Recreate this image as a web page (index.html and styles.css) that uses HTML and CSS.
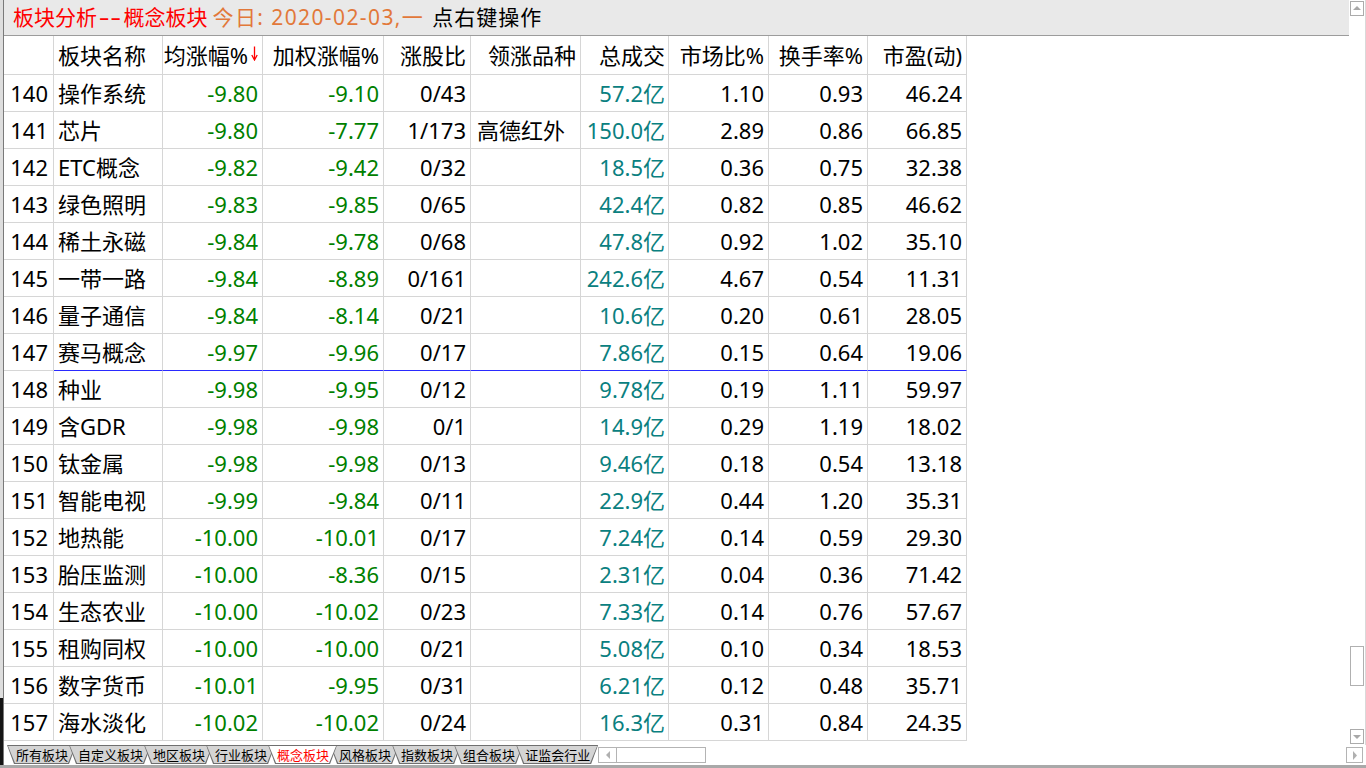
FILE: index.html
```html
<!DOCTYPE html>
<html lang="zh-CN">
<head>
<meta charset="utf-8">
<title>板块分析--概念板块</title>
<link rel="stylesheet" href="styles.css">
</head>
<body>
<div class="app">
  <div class="frame">
    <div class="edge"></div>
    <div class="content">
      <div class="upper">
        <div class="main">
          <div class="titlebar">
            <span class="t-red">板块分析<span class="dash">--</span>概念板块</span>
            <span class="t-orange">今日: 2020-02-03,一</span>
            <span class="t-black">点右键操作</span>
          </div>
          <div class="grid">
            <div class="row head">
              <div class="c idx"></div>
              <div class="c name">板块名称</div>
              <div class="c w100">均涨幅%<svg class="sort" width="7" height="15" viewBox="0 0 7 15"><path d="M3.5 0.5 V13" stroke="#ff0000" stroke-width="1.3"/><path d="M0.8 9 L3.5 14 L6.2 9" fill="none" stroke="#ff0000" stroke-width="1.3"/></svg></div>
              <div class="c w121">加权涨幅%</div>
              <div class="c w87">涨股比</div>
              <div class="c w110">领涨品种</div>
              <div class="c w88">总成交</div>
              <div class="c w100b">市场比%</div>
              <div class="c w99">换手率%</div>
              <div class="c w99">市盈(动)</div>
            </div>
            <div class="row"><div class="c idx">140</div><div class="c name">操作系统</div><div class="c w100 g">-9.80</div><div class="c w121 g">-9.10</div><div class="c w87">0/43</div><div class="c w110 lead"></div><div class="c w88 t">57.2亿</div><div class="c w100b">1.10</div><div class="c w99">0.93</div><div class="c w99">46.24</div></div>
            <div class="row"><div class="c idx">141</div><div class="c name">芯片</div><div class="c w100 g">-9.80</div><div class="c w121 g">-7.77</div><div class="c w87">1/173</div><div class="c w110 lead">高德红外</div><div class="c w88 t">150.0亿</div><div class="c w100b">2.89</div><div class="c w99">0.86</div><div class="c w99">66.85</div></div>
            <div class="row"><div class="c idx">142</div><div class="c name">ETC概念</div><div class="c w100 g">-9.82</div><div class="c w121 g">-9.42</div><div class="c w87">0/32</div><div class="c w110 lead"></div><div class="c w88 t">18.5亿</div><div class="c w100b">0.36</div><div class="c w99">0.75</div><div class="c w99">32.38</div></div>
            <div class="row"><div class="c idx">143</div><div class="c name">绿色照明</div><div class="c w100 g">-9.83</div><div class="c w121 g">-9.85</div><div class="c w87">0/65</div><div class="c w110 lead"></div><div class="c w88 t">42.4亿</div><div class="c w100b">0.82</div><div class="c w99">0.85</div><div class="c w99">46.62</div></div>
            <div class="row"><div class="c idx">144</div><div class="c name">稀土永磁</div><div class="c w100 g">-9.84</div><div class="c w121 g">-9.78</div><div class="c w87">0/68</div><div class="c w110 lead"></div><div class="c w88 t">47.8亿</div><div class="c w100b">0.92</div><div class="c w99">1.02</div><div class="c w99">35.10</div></div>
            <div class="row"><div class="c idx">145</div><div class="c name">一带一路</div><div class="c w100 g">-9.84</div><div class="c w121 g">-8.89</div><div class="c w87">0/161</div><div class="c w110 lead"></div><div class="c w88 t">242.6亿</div><div class="c w100b">4.67</div><div class="c w99">0.54</div><div class="c w99">11.31</div></div>
            <div class="row"><div class="c idx">146</div><div class="c name">量子通信</div><div class="c w100 g">-9.84</div><div class="c w121 g">-8.14</div><div class="c w87">0/21</div><div class="c w110 lead"></div><div class="c w88 t">10.6亿</div><div class="c w100b">0.20</div><div class="c w99">0.61</div><div class="c w99">28.05</div></div>
            <div class="row sep"><div class="c idx">147</div><div class="c name">赛马概念</div><div class="c w100 g">-9.97</div><div class="c w121 g">-9.96</div><div class="c w87">0/17</div><div class="c w110 lead"></div><div class="c w88 t">7.86亿</div><div class="c w100b">0.15</div><div class="c w99">0.64</div><div class="c w99">19.06</div></div>
            <div class="row"><div class="c idx">148</div><div class="c name">种业</div><div class="c w100 g">-9.98</div><div class="c w121 g">-9.95</div><div class="c w87">0/12</div><div class="c w110 lead"></div><div class="c w88 t">9.78亿</div><div class="c w100b">0.19</div><div class="c w99">1.11</div><div class="c w99">59.97</div></div>
            <div class="row"><div class="c idx">149</div><div class="c name">含GDR</div><div class="c w100 g">-9.98</div><div class="c w121 g">-9.98</div><div class="c w87">0/1</div><div class="c w110 lead"></div><div class="c w88 t">14.9亿</div><div class="c w100b">0.29</div><div class="c w99">1.19</div><div class="c w99">18.02</div></div>
            <div class="row"><div class="c idx">150</div><div class="c name">钛金属</div><div class="c w100 g">-9.98</div><div class="c w121 g">-9.98</div><div class="c w87">0/13</div><div class="c w110 lead"></div><div class="c w88 t">9.46亿</div><div class="c w100b">0.18</div><div class="c w99">0.54</div><div class="c w99">13.18</div></div>
            <div class="row"><div class="c idx">151</div><div class="c name">智能电视</div><div class="c w100 g">-9.99</div><div class="c w121 g">-9.84</div><div class="c w87">0/11</div><div class="c w110 lead"></div><div class="c w88 t">22.9亿</div><div class="c w100b">0.44</div><div class="c w99">1.20</div><div class="c w99">35.31</div></div>
            <div class="row"><div class="c idx">152</div><div class="c name">地热能</div><div class="c w100 g">-10.00</div><div class="c w121 g">-10.01</div><div class="c w87">0/17</div><div class="c w110 lead"></div><div class="c w88 t">7.24亿</div><div class="c w100b">0.14</div><div class="c w99">0.59</div><div class="c w99">29.30</div></div>
            <div class="row"><div class="c idx">153</div><div class="c name">胎压监测</div><div class="c w100 g">-10.00</div><div class="c w121 g">-8.36</div><div class="c w87">0/15</div><div class="c w110 lead"></div><div class="c w88 t">2.31亿</div><div class="c w100b">0.04</div><div class="c w99">0.36</div><div class="c w99">71.42</div></div>
            <div class="row"><div class="c idx">154</div><div class="c name">生态农业</div><div class="c w100 g">-10.00</div><div class="c w121 g">-10.02</div><div class="c w87">0/23</div><div class="c w110 lead"></div><div class="c w88 t">7.33亿</div><div class="c w100b">0.14</div><div class="c w99">0.76</div><div class="c w99">57.67</div></div>
            <div class="row"><div class="c idx">155</div><div class="c name">租购同权</div><div class="c w100 g">-10.00</div><div class="c w121 g">-10.00</div><div class="c w87">0/21</div><div class="c w110 lead"></div><div class="c w88 t">5.08亿</div><div class="c w100b">0.10</div><div class="c w99">0.34</div><div class="c w99">18.53</div></div>
            <div class="row"><div class="c idx">156</div><div class="c name">数字货币</div><div class="c w100 g">-10.01</div><div class="c w121 g">-9.95</div><div class="c w87">0/31</div><div class="c w110 lead"></div><div class="c w88 t">6.21亿</div><div class="c w100b">0.12</div><div class="c w99">0.48</div><div class="c w99">35.71</div></div>
            <div class="row"><div class="c idx">157</div><div class="c name">海水淡化</div><div class="c w100 g">-10.02</div><div class="c w121 g">-10.02</div><div class="c w87">0/24</div><div class="c w110 lead"></div><div class="c w88 t">16.3亿</div><div class="c w100b">0.31</div><div class="c w99">0.84</div><div class="c w99">24.35</div></div>
          </div>
        </div>
        <div class="vscroll">
          <div class="sbtn up"><svg width="12" height="13" viewBox="0 0 12 13"><path d="M2 8 L6 4 L10 8 Z" fill="#a8a8a8"/></svg></div>
          <div class="thumb"></div>
          <div class="sbtn down"><svg width="12" height="13" viewBox="0 0 12 13"><path d="M2 5 L6 9 L10 5 Z" fill="#a8a8a8"/></svg></div>
        </div>
      </div>
      <div class="tabbar">
        <div class="tab">所有板块</div>
        <div class="tab">自定义板块</div>
        <div class="tab">地区板块</div>
        <div class="tab">行业板块</div>
        <div class="tab active">概念板块</div>
        <div class="tab">风格板块</div>
        <div class="tab">指数板块</div>
        <div class="tab">组合板块</div>
        <div class="tab">证监会行业</div>
        <div class="hscroll">
          <div class="hbtn"><svg width="16" height="14" viewBox="0 0 16 14"><path d="M10 3 L6 7 L10 11 Z" fill="#b0b0b0"/></svg></div>
        </div>
        <div class="rbtn"><svg width="15" height="13" viewBox="0 0 15 13"><path d="M6 2 L10 6.5 L6 11 Z" fill="#b0b0b0"/></svg></div>
      </div>
    </div>
  </div>
  <div class="status"></div>
</div>
</body>
</html>
```
FILE: styles.css
```css
html, body {
  margin: 0;
  padding: 0;
  background: #ffffff;
}
body {
  width: 1366px;
  height: 768px;
  overflow: hidden;
  font-family: "Noto Sans", "Noto Sans CJK SC", sans-serif;
}
.app {
  width: 1366px;
  height: 768px;
  display: flex;
  flex-direction: column;
}
.frame {
  flex: 1;
  display: flex;
  min-height: 0;
}
.edge {
  width: 3px;
  background: linear-gradient(to bottom, #dedede 0, #dedede 698px, #151515 698px, #151515 100%);
}
.content {
  flex: 1;
  display: flex;
  flex-direction: column;
  border-left: 1px solid #7a7a7a;
  min-width: 0;
}
.upper {
  height: 745px;
  display: flex;
}
.main {
  flex: 1;
  display: flex;
  flex-direction: column;
  min-width: 0;
}
.titlebar {
  box-sizing: border-box;
  height: 36px;
  background: #e9e9e9;
  border-bottom: 1px solid #9c9c9c;
  padding-left: 9px;
  display: flex;
  align-items: center;
  font-size: 21px;
  line-height: 35px;
  white-space: nowrap;
}
.t-red { color: #ff0000; }
.dash {
  display: inline-block;
  transform: scaleX(1.6);
  letter-spacing: 0.5px;
  margin: 0 6px;
}
.t-orange { color: #e2783a; margin-left: 5px; letter-spacing: 1.4px; }
.t-black { color: #000000; margin-left: 8px; letter-spacing: 1px; }

.grid {
  display: flex;
  flex-direction: column;
}
.row {
  display: flex;
  height: 37px;
  font-size: 22px;
  color: #000;
}
.row.head {
  height: 39px;
}
.c {
  box-sizing: border-box;
  height: 100%;
  border-right: 1px solid #d6d6d6;
  border-bottom: 1px solid #d6d6d6;
  display: flex;
  align-items: center;
  justify-content: flex-end;
  padding: 0 4px;
  white-space: nowrap;
  overflow: hidden;
  line-height: 30px;
}
.row.sep .c:not(.idx) {
  border-bottom-color: #2a2aff;
}
.idx { width: 50px; padding-right: 5px; }
.name { width: 109px; justify-content: flex-start; padding-left: 4px; }
.w100 { width: 100px; }
.w121 { width: 121px; }
.w87 { width: 87px; }
.w110 { width: 110px; }
.lead { justify-content: flex-start; padding-left: 6px; }
.w88 { width: 88px; padding-right: 3px; }
.w100b { width: 100px; }
.w99 { width: 99px; }
.g { color: #008000; }
.t { color: #0a8080; }
.sort {
  margin-left: 3px;
  margin-bottom: 4px;
  flex: none;
}
.head .w100 { padding-right: 4px; }

.vscroll {
  box-sizing: border-box;
  width: 17px;
  border-right: 1px solid #d9d9d9;
  display: flex;
  flex-direction: column;
  align-items: flex-start;
}
.sbtn {
  box-sizing: border-box;
  width: 14px;
  height: 15px;
  margin-left: 1px;
  border: 1px solid #ababab;
  background: #fff;
  display: flex;
  align-items: center;
  justify-content: center;
}
.sbtn.up { margin-top: 1px; }
.sbtn.down { margin-top: auto; margin-bottom: 1px; }
.thumb {
  box-sizing: border-box;
  width: 14px;
  height: 40px;
  margin-left: 1px;
  margin-top: 630px;
  border: 1px solid #b0b0b0;
  background: #fff;
}

.tabbar {
  height: 20px;
  display: flex;
  align-items: flex-start;
  padding-left: 3px;
}
.tab {
  position: relative;
  z-index: 0;
  height: 19px;
  padding: 0 8px 0 9px;
  margin-left: -7px;
  font-family: "Noto Sans CJK SC", sans-serif;
  font-size: 13px;
  line-height: 19px;
  color: #000;
  background: #6f6f6f;
  clip-path: polygon(0 0, 100% 0, calc(100% - 7px) 100%, 7px 100%);
  white-space: nowrap;
}
.tab:first-child { margin-left: 0; }
.tab::before {
  content: "";
  position: absolute;
  z-index: -1;
  top: 1px;
  bottom: 1px;
  left: 1px;
  right: 1px;
  background: #d4d4d4;
  clip-path: polygon(0 0, 100% 0, calc(100% - 7px) 100%, 7px 100%);
}
.tab.active { z-index: 5; color: #ff0000; }
.tab.active::before { background: #ffffff; }

.hscroll {
  box-sizing: border-box;
  width: 108px;
  height: 16px;
  margin-left: 0;
  margin-top: 2px;
  border: 1px solid #b4b4b4;
  display: flex;
}
.hbtn {
  box-sizing: border-box;
  width: 18px;
  height: 100%;
  border-right: 1px solid #b4b4b4;
  display: flex;
  align-items: center;
  justify-content: center;
}
.rbtn {
  box-sizing: border-box;
  width: 17px;
  height: 16px;
  margin-left: auto;
  margin-right: 3px;
  margin-top: 2px;
  border: 1px solid #b4b4b4;
  display: flex;
  align-items: center;
  justify-content: center;
}
.status {
  height: 3px;
  background: #a9a9a9;
}
```
